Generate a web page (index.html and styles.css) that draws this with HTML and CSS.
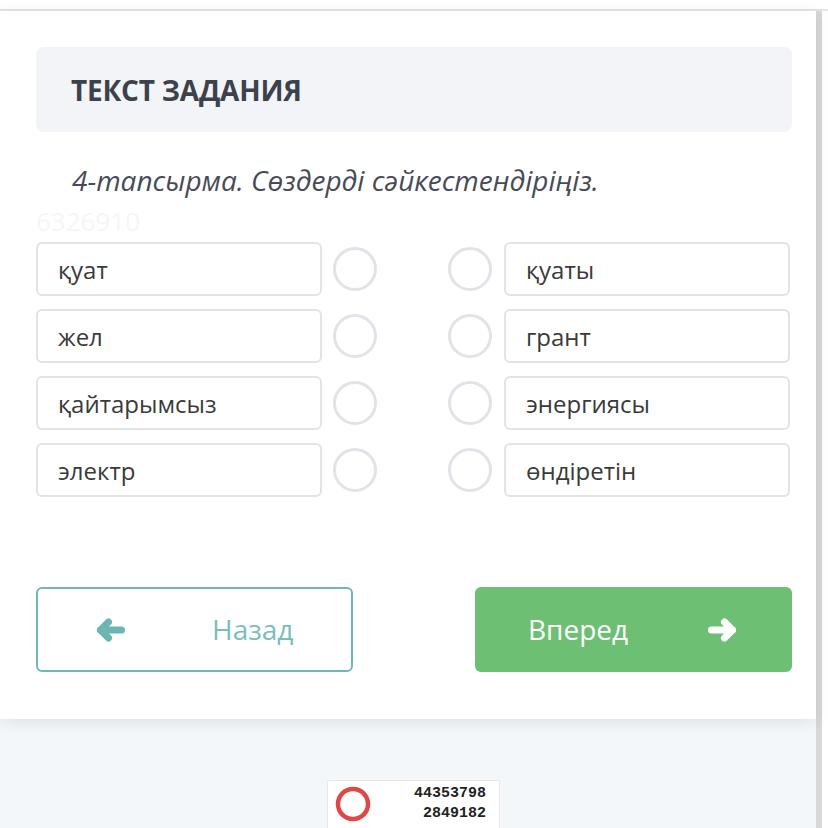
FILE: index.html
```html
<!DOCTYPE html>
<html lang="kk">
<head>
<meta charset="utf-8">
<title>Текст задания</title>
<link rel="stylesheet" href="styles.css">
</head>
<body>
<div class="topbar"></div>
<div class="layout">
  <main class="main">
    <section class="card">
      <div class="task-head">ТЕКСТ ЗАДАНИЯ</div>
      <p class="task-text">4-тапсырма. Сөздерді сәйкестендіріңіз.</p>
      <div class="watermark">6326910</div>
      <div class="pairs">
        <div class="pair">
          <div class="word">қуат</div><span class="dot dot-l"></span><span class="dot dot-r"></span><div class="word">қуаты</div>
        </div>
        <div class="pair">
          <div class="word">жел</div><span class="dot dot-l"></span><span class="dot dot-r"></span><div class="word">грант</div>
        </div>
        <div class="pair">
          <div class="word">қайтарымсыз</div><span class="dot dot-l"></span><span class="dot dot-r"></span><div class="word">энергиясы</div>
        </div>
        <div class="pair">
          <div class="word">электр</div><span class="dot dot-l"></span><span class="dot dot-r"></span><div class="word">өндіретін</div>
        </div>
      </div>
      <div class="nav">
        <button class="btn btn-back">
          <svg class="arrow" width="30" height="24" viewBox="0 -1 30 24" aria-hidden="true"><path d="M4.5 11 H25.5" /><path d="M12.5 3 L4.5 11 L12.5 19" /></svg>
          <span class="btn-label">Назад</span>
        </button>
        <button class="btn btn-next">
          <span class="btn-label">Вперед</span>
          <svg class="arrow" width="30" height="24" viewBox="0 -1 30 24" aria-hidden="true"><path d="M4.5 11 H25.5" /><path d="M17.5 3 L25.5 11 L17.5 19" /></svg>
        </button>
      </div>
    </section>
    <div class="below">
      <div class="stamp">
        <svg class="stamp-ring" width="40" height="40" viewBox="0 0 40 40" aria-hidden="true"><circle cx="20" cy="20" r="15" /></svg>
        <div class="stamp-nums">
          <div>44353798</div>
          <div>2849182</div>
        </div>
      </div>
    </div>
  </main>
  <div class="rail"></div>
</div>
</body>
</html>
```
FILE: styles.css
```css
html, body {
  margin: 0;
  padding: 0;
  height: 828px;
  overflow: hidden;
}
body {
  background: #ffffff;
  font-family: "Open Sans", "Noto Sans", sans-serif;
}
.topbar {
  height: 9px;
  border-bottom: 2px solid #e4e4e4;
  background: #fff;
}
.layout {
  display: flex;
  height: 817px;
}
.main {
  width: 816px;
  background: #f4f7fa;
  display: flex;
  flex-direction: column;
}
.rail {
  width: 6px;
  background: #d8d8d8;
}
.card {
  background: #fff;
  padding: 36px 24px 47px 36px;
  box-shadow: 0 3px 14px rgba(0, 0, 0, 0.09);
  position: relative;
  z-index: 1;
}
.task-head {
  height: 85px;
  box-sizing: border-box;
  background: #f3f4f7;
  border-radius: 8px;
  padding-left: 35px;
  display: flex;
  align-items: center;
  font-size: 28px;
  font-weight: 700;
  color: #3c424d;
  letter-spacing: -0.2px;
}
.task-text {
  margin: 30px 0 0 36px;
  font-size: 28px;
  line-height: 36px;
  font-style: italic;
  color: #464b56;
}
.watermark {
  margin-top: 6px;
  height: 34px;
  line-height: 34px;
  font-size: 26px;
  color: #f6f6f6;
}
.pairs {
  margin-top: 4px;
  display: flex;
  flex-direction: column;
  gap: 13px;
}
.pair {
  display: flex;
  align-items: center;
  height: 54px;
}
.word {
  width: 286px;
  height: 54px;
  box-sizing: border-box;
  border: 2px solid #e3e3e3;
  border-radius: 6px;
  padding-left: 20px;
  display: flex;
  align-items: center;
  font-size: 24px;
  color: #3a3a3a;
}
.dot {
  width: 44px;
  height: 44px;
  box-sizing: border-box;
  border: 3px solid #e2e3e8;
  border-radius: 50%;
}
.dot-l {
  margin-left: 11px;
}
.dot-r {
  margin-left: 71px;
  margin-right: 12px;
}
.nav {
  margin-top: 90px;
  display: flex;
  justify-content: space-between;
}
.btn {
  width: 317px;
  height: 85px;
  box-sizing: border-box;
  border-radius: 6px;
  display: flex;
  align-items: center;
  font-family: "Open Sans", "Noto Sans", sans-serif;
  font-size: 28px;
  cursor: pointer;
}
.btn-back {
  background: #fff;
  border: 2px solid #6fb8b4;
  color: #78bfbb;
  padding: 0 0 0 58px;
  gap: 86px;
}
.btn-back .arrow path {
  stroke: #6ab6b2;
}
.btn-next {
  background: #6dbf73;
  border: none;
  color: #fff;
  padding: 0 0 0 53px;
  gap: 79px;
}
.btn-next .arrow path {
  stroke: #fff;
}
.arrow path {
  fill: none;
  stroke-width: 7;
  stroke-linecap: round;
  stroke-linejoin: round;
}
.btn-label {
  line-height: 1;
  padding-bottom: 2px;
}
.below {
  display: flex;
  padding: 61px 0 0 327px;
}
.stamp {
  width: 173px;
  height: 70px;
  box-sizing: border-box;
  background: #fff;
  border: 1px solid #e6e8ea;
  border-radius: 2px;
  display: flex;
  padding: 3px 13px 0 5px;
}
.stamp-ring circle {
  fill: none;
  stroke: #e04848;
  stroke-width: 4.5;
}
.stamp-nums {
  flex: 1;
  text-align: right;
  font-family: "Liberation Mono", "DejaVu Sans Mono", monospace;
  font-weight: 700;
  font-size: 15px;
  line-height: 20px;
  color: #222;
}
```
